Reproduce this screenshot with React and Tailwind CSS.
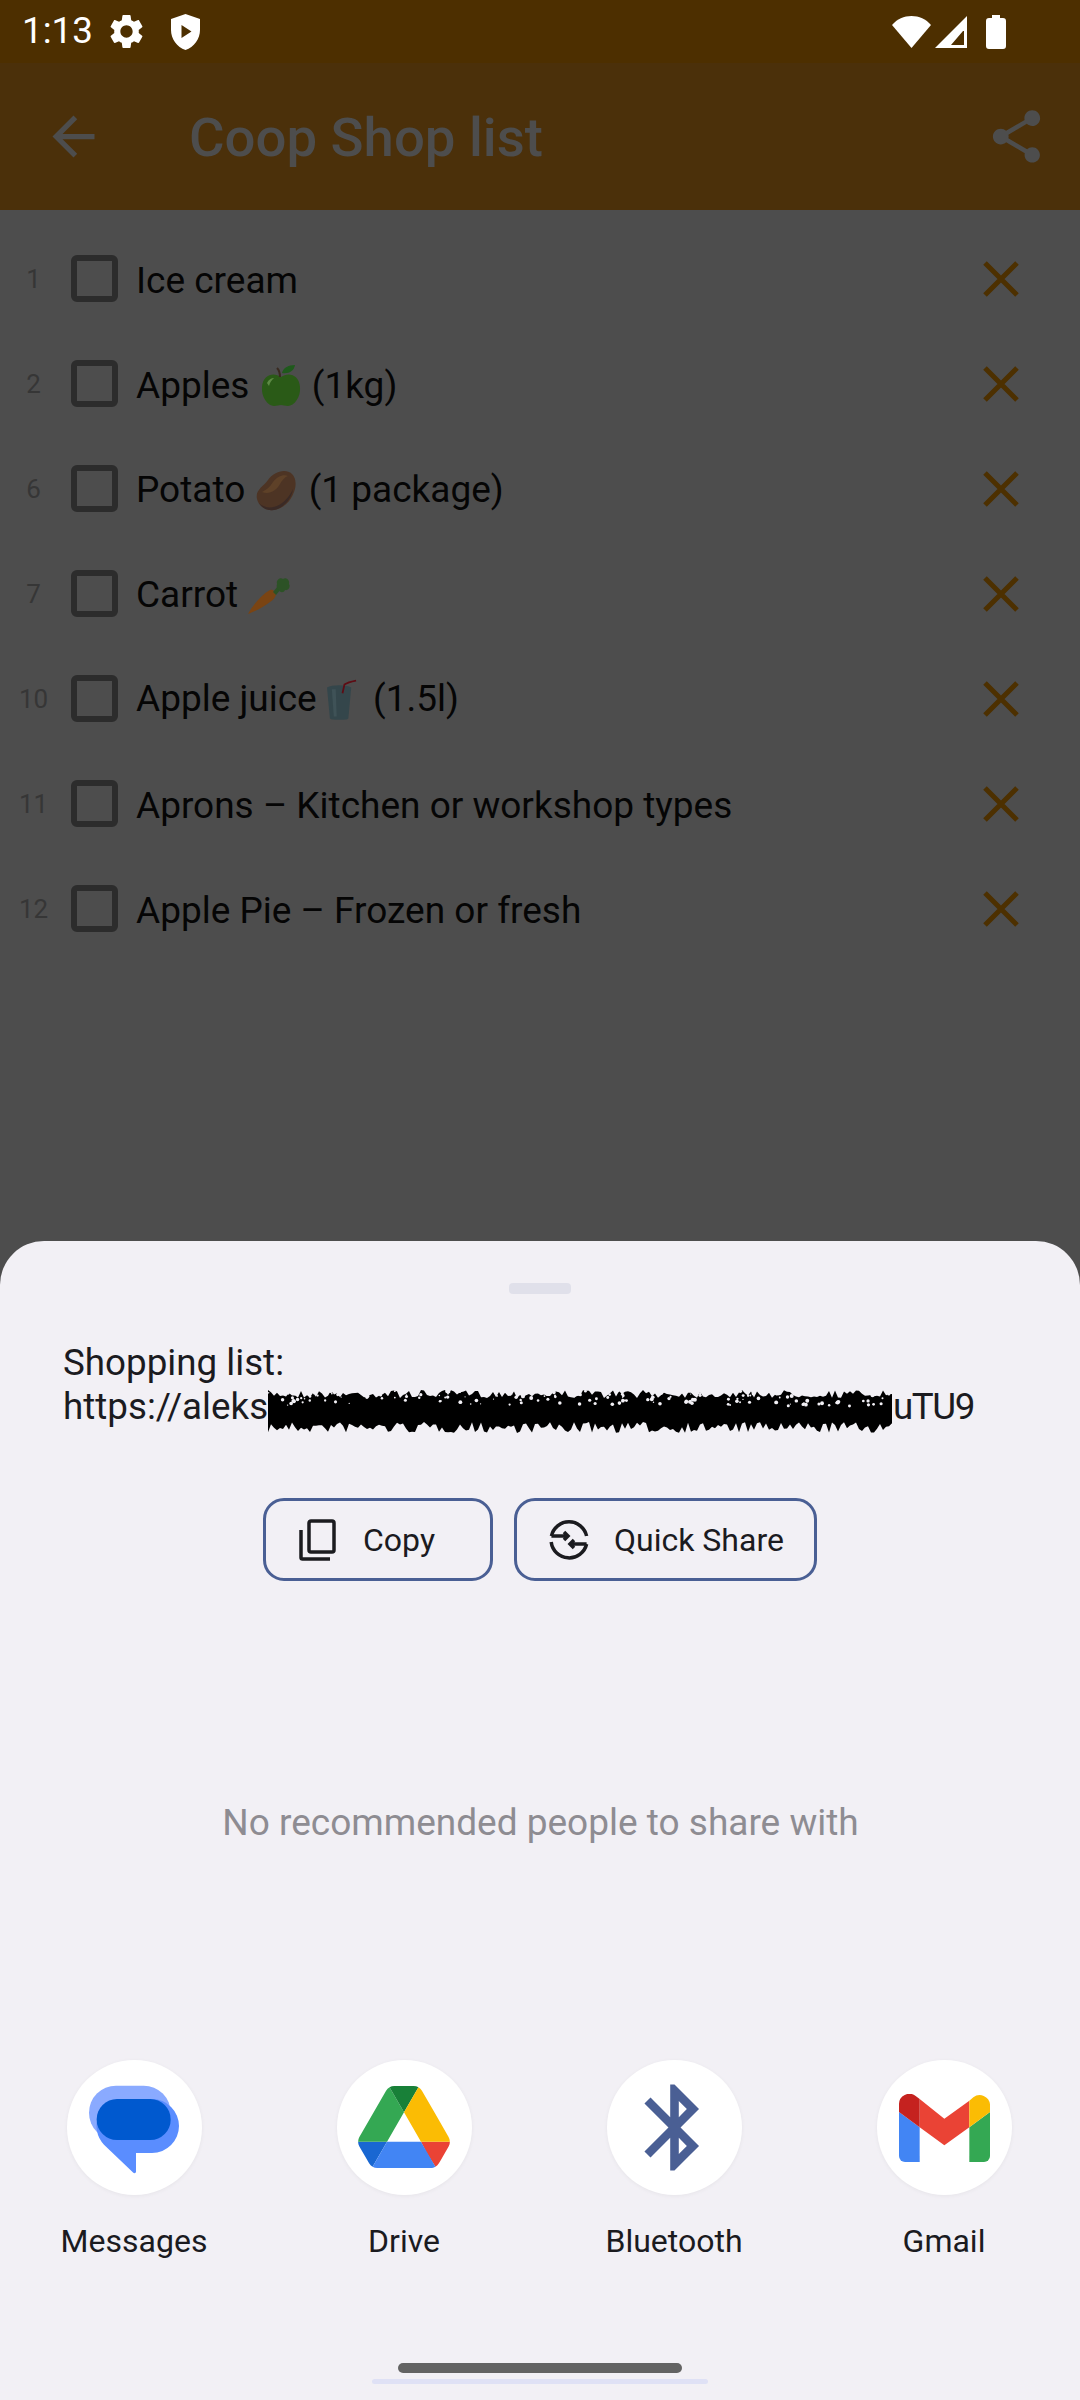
import React from 'react';

const items = [
    { n: 1, label: <>Ice cream</> },
    { n: 2, label: <>Apples <AppleEmoji /> (1kg)</> },
    { n: 6, label: <>Potato <PotatoEmoji /> (1 package)</> },
    { n: 7, label: <>Carrot <CarrotEmoji /></> },
    { n: 10, label: <>Apple juice <CupEmoji /> (1.5l)</> },
    { n: 11, label: <>Aprons – Kitchen or workshop types</> },
    { n: 12, label: <>Apple Pie – Frozen or fresh</> },
];

function AppleEmoji() {
    return (
        <svg viewBox="0 0 44 44" className="inline-block w-[44px] h-[44px] align-[-9px]">
            <path d="M22 14C15 9 4 11 3 24c-1 10 6 19 12 19 3 0 5-1 7-1s4 1 7 1c6 0 13-9 12-19-1-13-12-15-19-10z" fill="#2a5a17" />
            <path d="M8 20c2-4 5-5 7-5-2 2-4 4-5 8z" fill="#5d8a45" />
            <path d="M21 14c0-4-1-7-3-9" stroke="#3a2a20" strokeWidth="2" fill="none" />
            <path d="M23 10c1-5 6-8 13-8-1 6-6 9-13 8z" fill="#1f5a1c" />
        </svg>
    );
}

function PotatoEmoji() {
    return (
        <svg viewBox="0 0 44 44" className="inline-block w-[44px] h-[44px] align-[-10px] mr-[1px]">
            <path d="M3 31C1 22 9 19 14 12 19 5 28 1 35 4c7 3 8 12 5 20-3 9-11 17-20 18-8 1-15-3-17-11z" fill="#4d3424" />
            <path d="M8 24c4-2 8-5 11-10 4-5 10-8 15-6-3 1-6 4-8 8-4 7-11 11-18 8z" fill="#5e4128" />
            <path d="M5 35c5 5 13 6 20 2 7-4 11-10 14-16-1 9-9 19-19 21-7 1-12-2-15-7z" fill="#3a2a26" />
        </svg>
    );
}

function CarrotEmoji() {
    return (
        <svg viewBox="0 0 44 38" className="inline-block w-[44px] h-[38px] align-[-8px]">
            <path d="M1 37C6 28 14 18 23 13c3-1 6 2 6 5-1 3-3 5-6 7-7 5-14 9-22 12z" fill="#7a4413" />
            <path d="M26 15l5-6 3 3-5 6z" fill="#2c5226" />
            <path d="M30 7c-1-4 3-7 6-5 3-2 7 1 6 5 2 3-1 7-4 6-1 3-5 3-6 0-2-1-3-4-2-6z" fill="#2c5226" />
        </svg>
    );
}

function CupEmoji() {
    return (
        <svg viewBox="0 0 32 42" className="inline-block w-[31px] h-[42px] align-[-10px] ml-[1px] mr-[6px]">
            <path d="M0 8c5-3 20-3 25 0l-3 32c-1 2-17 2-19 0z" fill="#34464b" />
            <path d="M5 10h4l1 28H7z" fill="#3f5257" />
            <path d="M16 14l2-9c3-2 7-3 12-4" stroke="#5e0c14" strokeWidth="1.800" fill="none" />
        </svg>
    );
}

// seeded so the scribble stays the same every render
function scribble() {
    let seed = 7;
    const rnd = () => {
        seed = (seed * 16807) % 2147483647;
        return seed / 2147483647;
    };
    const top = [];
    const bottom = [];
    for (let x = 0; x <= 625; x += 3) {
        top.push(`${x} ${2 + rnd() * 8}`);
        bottom.unshift(`${x} ${34 + rnd() * 11}`);
    }
    const specks = [];
    for (let i = 0; i < 170; i++) {
        specks.push({ x: rnd() * 625, y: 3 + rnd() * 15, r: 0.6 + rnd() * 1.4, white: true });
    }
    return { d: `M${top.join('L')}L${bottom.join('L')}Z`, specks };
}

const blob = scribble();

function Redaction() {
    return (
        <svg viewBox="0 0 625 46" className="inline-block w-[625px] h-[46px] align-[-9px] my-[-6px]">
            <path d={blob.d} fill="#000" />
            {blob.specks.map((s, i) => (
                <circle key={i} cx={s.x} cy={s.y} r={s.r} fill="#f2f0f5" />
            ))}
        </svg>
    );
}

function StatusBar() {
    return (
        <div className="h-[63px] bg-[#4d2f00] flex items-center pl-[22px] pr-[74px] text-white">
            <span className="text-[36.750px] leading-none">1:13</span>
            <svg viewBox="0 0 24 24" className="w-[41px] h-[41px] ml-[13px]" fill="#fff">
                <path d="M19.14 12.94c.04-.3.06-.61.06-.94 0-.32-.02-.64-.07-.94l2.03-1.58c.18-.14.23-.41.12-.61l-1.92-3.32c-.12-.22-.37-.29-.59-.22l-2.39.96c-.5-.38-1.03-.7-1.62-.94l-.36-2.54c-.04-.24-.24-.41-.48-.41h-3.84c-.24 0-.43.17-.47.41l-.36 2.54c-.59.24-1.13.57-1.62.94l-2.39-.96c-.22-.08-.47 0-.59.22L2.74 8.87c-.12.21-.08.47.12.61l2.03 1.58c-.05.3-.09.63-.09.94s.02.64.07.94l-2.03 1.58c-.18.14-.23.41-.12.61l1.92 3.32c.12.22.37.29.59.22l2.39-.96c.5.38 1.03.7 1.62.94l.36 2.54c.05.24.24.41.48.41h3.84c.24 0 .44-.17.47-.41l.36-2.54c.59-.24 1.13-.56 1.62-.94l2.39.96c.22.08.47 0 .59-.22l1.92-3.32c.12-.22.07-.47-.12-.61l-2.01-1.58zM12 15.6c-1.98 0-3.6-1.62-3.6-3.6s1.62-3.6 3.6-3.6 3.6 1.62 3.6 3.6-1.62 3.6-3.6 3.6z" />
            </svg>
            <svg viewBox="0 0 29 36" className="w-[29px] h-[36px] ml-[24px]" fill="#fff">
                <path fillRule="evenodd" d="M14.5 0L29 5v11c0 9-6 17-14.500 20C6 33 0 25 0 16V5zM10.500 11v13l10-6.500z" />
            </svg>
            <div className="flex-1" />
            <svg viewBox="0 0 39 32" className="w-[39px] h-[32px]" fill="#fff">
                <path d="M0 9C5 3 12 0 19.500 0S34 3 39 9L19.500 32z" />
            </svg>
            <svg viewBox="0 0 32 32" className="w-[32px] h-[32px] ml-[4px]" fill="#fff">
                <path fillRule="evenodd" d="M32 0V32H0zM29 29V15H28L16 29z" />
            </svg>
            <svg viewBox="0 0 20 34" className="w-[20px] h-[34px] ml-[19px]" fill="#fff">
                <path d="M6 0h8v3h3a3 3 0 0 1 3 3v25a3 3 0 0 1-3 3H3a3 3 0 0 1-3-3V6a3 3 0 0 1 3-3h3z" />
            </svg>
        </div>
    );
}

function AppBar() {
    return (
        <div className="h-[147px] bg-[#4b300a] flex items-center pl-[42px] pr-[32px] text-[#4d4d4d]">
            <svg viewBox="0 0 24 24" className="w-[63px] h-[63px]" fill="currentColor">
                <path d="M20 11H7.830l5.590-5.590L12 4l-8 8 8 8 1.410-1.410L7.830 13H20v-2z" />
            </svg>
            <span className="ml-[84px] pt-[2px] text-[54.500px] leading-none font-medium flex-1">Coop Shop list</span>
            <svg viewBox="0 0 24 24" className="w-[63px] h-[63px]" fill="currentColor">
                <path d="M18 16.080c-.76 0-1.440.3-1.960.77L8.910 12.700c.05-.23.09-.46.09-.7s-.04-.47-.09-.7l7.050-4.110c.54.5 1.250.81 2.040.81 1.660 0 3-1.340 3-3s-1.340-3-3-3-3 1.340-3 3c0 .24.04.47.09.7L8.040 9.810C7.500 9.310 6.790 9 6 9c-1.660 0-3 1.340-3 3s1.340 3 3 3c.79 0 1.500-.31 2.040-.81l7.120 4.160c-.05.21-.08.43-.08.65 0 1.610 1.310 2.920 2.920 2.920 1.610 0 2.920-1.310 2.920-2.920s-1.310-2.920-2.920-2.920z" />
            </svg>
        </div>
    );
}

function Row({ item }) {
    return (
        <div className="h-[105px] flex items-center">
            <span className="w-[67px] text-center text-[26px] leading-none text-[#363636]">{item.n}</span>
            <span className="ml-[4px] mb-[1px] w-[47px] h-[47px] border-[6px] border-[#2c2c2c] rounded-[6px] shrink-0" />
            <span className="ml-[18px] pt-[3px] flex-1 text-[37px] leading-none text-[#050505] whitespace-pre">{item.label}</span>
            <svg viewBox="0 0 36 36" className="w-[36px] h-[36px] mr-[61px]" stroke="#4d3000" strokeWidth="5" fill="none">
                <path d="M2 2L34 34M34 2L2 34" />
            </svg>
        </div>
    );
}

function MessagesIcon() {
    return (
        <svg viewBox="0 0 405 405" className="w-[135px] h-[135px]">
            <rect x="66" y="77" width="245" height="163" rx="81" fill="#8aaaff" />
            <path d="M170 117H255A81 81 0 0 1 255 279H207V335C207 339 202 341 199 338L111 254A81 81 0 0 1 170 117Z" fill="#5a8dff" />
            <rect x="89" y="117" width="222" height="123" rx="61" fill="#0059cf" />
        </svg>
    );
}

function DriveIcon() {
    return (
        <svg viewBox="0 0 87.300 78" className="w-[92px] h-[82px] mt-[-2px]">
            <path d="m6.600 66.850 3.850 6.650c.8 1.400 1.950 2.500 3.300 3.300l13.750-23.800h-27.500c0 1.550.4 3.100 1.200 4.500z" fill="#1967d2" />
            <path d="m43.650 25-13.750-23.800c-1.350.8-2.500 1.900-3.300 3.300l-25.400 44a9.060 9.060 0 0 0 -1.200 4.500h27.500z" fill="#34a853" />
            <path d="m73.550 76.800c1.350-.8 2.500-1.900 3.300-3.300l1.600-2.750 7.650-13.250c.8-1.400 1.200-2.950 1.200-4.500h-27.502l5.852 11.500z" fill="#ea4335" />
            <path d="m43.650 25 13.750-23.800c-1.350-.8-2.900-1.200-4.500-1.200h-18.500c-1.600 0-3.150.45-4.500 1.200z" fill="#188038" />
            <path d="m59.800 53h-32.300l-13.750 23.800c1.350.8 2.900 1.200 4.500 1.200h50.800c1.600 0 3.150-.45 4.500-1.200z" fill="#4285f4" />
            <path d="m73.400 26.500-12.700-22c-.8-1.400-1.950-2.500-3.300-3.300l-13.750 23.800 16.150 28h27.450c0-1.550-.4-3.100-1.200-4.500z" fill="#fbbc04" />
        </svg>
    );
}

function BluetoothIcon() {
    return (
        <svg viewBox="0 0 24 24" className="w-[103px] h-[103px]" fill="#4a5f94">
            <path d="M17.710 7.710L12 2h-1v7.590L6.410 5 5 6.410 10.590 12 5 17.590 6.410 19 11 14.410V22h1l5.710-5.710-4.300-4.290 4.300-4.290zM13 5.830l1.880 1.880L13 9.590V5.830zm1.880 10.460L13 18.170v-3.760l1.880 1.880z" />
        </svg>
    );
}

function GmailIcon() {
    return (
        <svg viewBox="0 0 273 204" className="w-[91px] h-[68px]">
            <path d="M0 54L62 100V204H18A18 18 0 0 1 0 186Z" fill="#4285f4" />
            <path d="M211 100L273 54V186A18 18 0 0 1 255 204H211Z" fill="#34a853" />
            <path d="M62 15L136 74L211 20V100L136 154L62 100Z" fill="#ea4335" />
            <path d="M0 54V31A31 31 0 0 1 50 6L62 15V100Z" fill="#c5221f" />
            <path d="M211 20L223 10A31 31 0 0 1 273 31V54L211 100Z" fill="#fbbc04" />
        </svg>
    );
}

const apps = [
    { name: 'Messages', icon: <MessagesIcon /> },
    { name: 'Drive', icon: <DriveIcon /> },
    { name: 'Bluetooth', icon: <BluetoothIcon /> },
    { name: 'Gmail', icon: <GmailIcon /> },
];

function ShareSheet() {
    return (
        <div className="h-[1159px] bg-[#f2f0f5] rounded-t-[44px] flex flex-col items-center text-[#1b1b1f] shrink-0">
            <div className="mt-[42px] w-[62px] h-[11px] rounded-[4px] bg-[#e0e0ea]" />
            <div className="mt-[47px] h-[88px] w-full pl-[63px] text-[36.75px] leading-[44px] whitespace-nowrap">
                <div>Shopping list:</div>
                <div>https://aleks<Redaction /><span className="tracking-[-1.5px]">uTU9</span></div>
            </div>
            <div className="mt-[69px] flex gap-[21px] w-full pl-[263px] text-[32px] leading-none">
                <button className="w-[230px] h-[83px] border-[3px] border-[#4a5f94] rounded-[21px] flex items-center pl-[33px]">
                    <svg viewBox="0 0 37 42" className="w-[37px] h-[42px]" fill="none" stroke="#1b1b1f" strokeWidth="3.500">
                        <rect x="10" y="2" width="25" height="31" rx="2" />
                        <path d="M2 11V38.500a1.500 1.500 0 0 0 1.500 1.500H31" />
                    </svg>
                    <span className="ml-[27px]">Copy</span>
                </button>
                <button className="w-[303px] h-[83px] border-[3px] border-[#4a5f94] rounded-[21px] flex items-center pl-[32px]">
                    <svg viewBox="0 0 40 40" className="w-[40px] h-[40px]" fill="none" stroke="#1b1b1f" strokeWidth="3.500">
                        <path d="M2.400 16A18 18 0 0 1 37.600 16M37.600 24A18 18 0 0 1 2.200 22" />
                        <path d="M2.400 16H19M15 12l4 4-4 4M37.600 24H21M25 20l-4 4 4 4" />
                    </svg>
                    <span className="ml-[25px]">Quick Share</span>
                </button>
            </div>
            <div className="mt-[221px] ml-[1px] text-[37px] leading-[42px] text-[#8e8c92]">No recommended people to share with</div>
            <div className="mt-[216px] grid grid-cols-4 w-[1080px] self-start ml-[-1px]">
                {apps.map((app) => (
                    <div key={app.name} className="flex flex-col items-center">
                        <div className="w-[135px] h-[135px] rounded-full bg-white shadow-[0_1px_4px_rgba(0,0,0,0.05)] flex items-center justify-center">
                            {app.icon}
                        </div>
                        <span className="mt-[27px] text-[32px] leading-[38px]">{app.name}</span>
                    </div>
                ))}
            </div>
            <div className="flex-1" />
            <div className="w-[284px] h-[10px] rounded-full bg-[#636363]" />
            <div className="mt-[6px] mb-[16px] w-[336px] h-[5px] rounded-full bg-[#dfe1f5]" />
        </div>
    );
}

export default function App() {
    return (
        <div className="w-[1080px] h-[2400px] bg-[#4d4d4d] flex flex-col overflow-hidden font-[Roboto,sans-serif]">
            <StatusBar />
            <AppBar />
            <div className="flex-1 pt-[16px]">
                {items.map((item) => (
                    <Row key={item.n} item={item} />
                ))}
            </div>
            <ShareSheet />
        </div>
    );
}
